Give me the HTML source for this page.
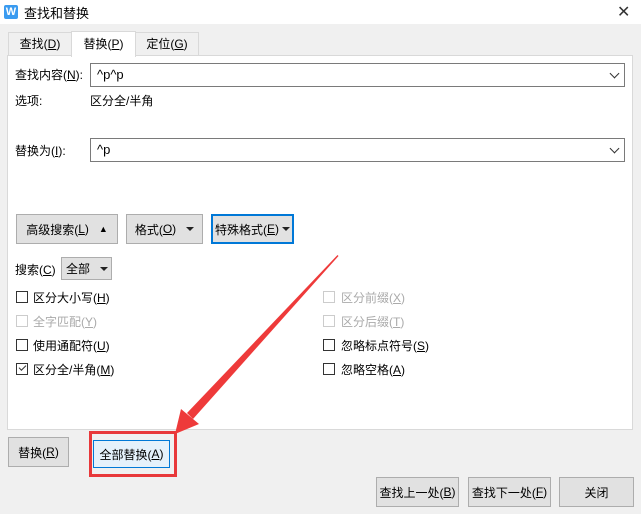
<!DOCTYPE html>
<html><head><meta charset="utf-8"><style>
*{box-sizing:border-box;margin:0;padding:0}
body{width:641px;height:514px;background:#f0f0f0;position:relative;overflow:hidden;font-family:"Liberation Sans","Noto Sans CJK SC",sans-serif;font-size:12px;color:#000}
.a{position:absolute;white-space:nowrap}
.btn{position:absolute;background:#e1e1e1;border:1px solid #adadad;display:flex;align-items:center;justify-content:center}
.cb{position:absolute;width:12px;height:12px;border:1px solid #333;background:#fff}
.cb.d{border-color:#ccc}
.g{color:#aaa}
.inp{position:absolute;background:#fff;border:1px solid #7a7a7a;padding-left:6px;line-height:21px;font-size:13px}
.chev{position:absolute;right:6px;top:6px;width:7px;height:7px;border-right:1px solid #333;border-bottom:1px solid #333;transform:rotate(45deg)}
.tri{display:inline-block;width:0;height:0;border-left:4px solid transparent;border-right:4px solid transparent;border-top:4px solid #222}
</style></head><body>
<div class="a" style="left:0;top:0;width:641px;height:24px;background:#fff"></div>
<div class="a" style="left:4px;top:5px;width:14px;height:14px;background:#3a9bf0;border-radius:2px;color:#fff;font-size:11px;line-height:14px;text-align:center;font-weight:bold">W</div>
<div class="a" style="left:24px;top:3px;font-size:13px">查找和替换</div>
<div class="a" style="left:617px;top:2px;font-size:16px;color:#333">✕</div>

<div class="a" style="left:8px;top:32px;width:64px;height:24px;border:1px solid #d9d9d9;background:#f0f0f0;text-align:center;line-height:22px">查找(<u>D</u>)</div>
<div class="a" style="left:135px;top:32px;width:64px;height:24px;border:1px solid #d9d9d9;background:#f0f0f0;text-align:center;line-height:22px">定位(<u>G</u>)</div>
<div class="a" style="left:7px;top:55px;width:626px;height:375px;background:#fff;border:1px solid #d9d9d9"></div>
<div class="a" style="left:71px;top:31px;width:65px;height:26px;border:1px solid #d9d9d9;border-bottom:none;background:#fff;text-align:center;line-height:24px">替换(<u>P</u>)</div>

<div class="a" style="left:15px;top:66px">查找内容(<u>N</u>):</div>
<div class="inp" style="left:90px;top:63px;width:535px;height:24px">^p^p<div class="chev"></div></div>
<div class="a" style="left:15px;top:92px">选项:</div>
<div class="a" style="left:90px;top:92px">区分全/半角</div>
<div class="a" style="left:15px;top:142px">替换为(<u>I</u>):</div>
<div class="inp" style="left:90px;top:138px;width:535px;height:24px">^p<div class="chev"></div></div>

<div class="btn" style="left:16px;top:214px;width:102px;height:30px">高级搜索(<u>L</u>)&nbsp;&nbsp;&nbsp;<span style="font-size:9px">▲</span></div>
<div class="btn" style="left:126px;top:214px;width:77px;height:30px">格式(<u>O</u>)&nbsp;&nbsp;&nbsp;<span class="tri"></span></div>
<div class="btn" style="left:211px;top:214px;width:83px;height:30px;border:2px solid #0078d7">特殊格式(<u>E</u>)<span class="tri" style="margin-left:3px"></span></div>

<div class="a" style="left:15px;top:261px">搜索(<u>C</u>)</div>
<div class="btn" style="left:61px;top:257px;width:51px;height:23px;justify-content:flex-start;padding-left:4px">全部&nbsp;&nbsp;&nbsp;<span class="tri"></span></div>

<div class="cb" style="left:16px;top:291px"></div><div class="a" style="left:33px;top:289px">区分大小写(<u>H</u>)</div>
<div class="cb d" style="left:16px;top:315px"></div><div class="a g" style="left:33px;top:313px">全字匹配(<u>Y</u>)</div>
<div class="cb" style="left:16px;top:339px"></div><div class="a" style="left:33px;top:337px">使用通配符(<u>U</u>)</div>
<div class="cb" style="left:16px;top:363px"><span style="position:absolute;left:2px;top:1px;width:7px;height:4px;border-left:1px solid #333;border-bottom:1px solid #333;transform:rotate(-45deg)"></span></div><div class="a" style="left:33px;top:361px">区分全/半角(<u>M</u>)</div>

<div class="cb d" style="left:323px;top:291px"></div><div class="a g" style="left:341px;top:289px">区分前缀(<u>X</u>)</div>
<div class="cb d" style="left:323px;top:315px"></div><div class="a g" style="left:341px;top:313px">区分后缀(<u>T</u>)</div>
<div class="cb" style="left:323px;top:339px"></div><div class="a" style="left:341px;top:337px">忽略标点符号(<u>S</u>)</div>
<div class="cb" style="left:323px;top:363px"></div><div class="a" style="left:341px;top:361px">忽略空格(<u>A</u>)</div>

<div class="btn" style="left:8px;top:437px;width:61px;height:30px">替换(<u>R</u>)</div>
<div class="btn" style="left:93px;top:440px;width:77px;height:28px;background:#e5f1fb;border-color:#0078d7">全部替换(<u>A</u>)</div>
<div class="a" style="left:89px;top:431px;width:88px;height:46px;border:3px solid #e8383a"></div>

<div class="btn" style="left:376px;top:477px;width:83px;height:30px">查找上一处(<u>B</u>)</div>
<div class="btn" style="left:468px;top:477px;width:83px;height:30px">查找下一处(<u>F</u>)</div>
<div class="btn" style="left:559px;top:477px;width:75px;height:30px">关闭</div>

<svg class="a" style="left:0;top:0" width="641" height="514">
<polygon points="337.5,255 338.5,256 193,419 187,413" fill="#ee3a3a"/>
<polygon points="175,434 181,409 199,424" fill="#ee3a3a"/>
</svg>
</body></html>
